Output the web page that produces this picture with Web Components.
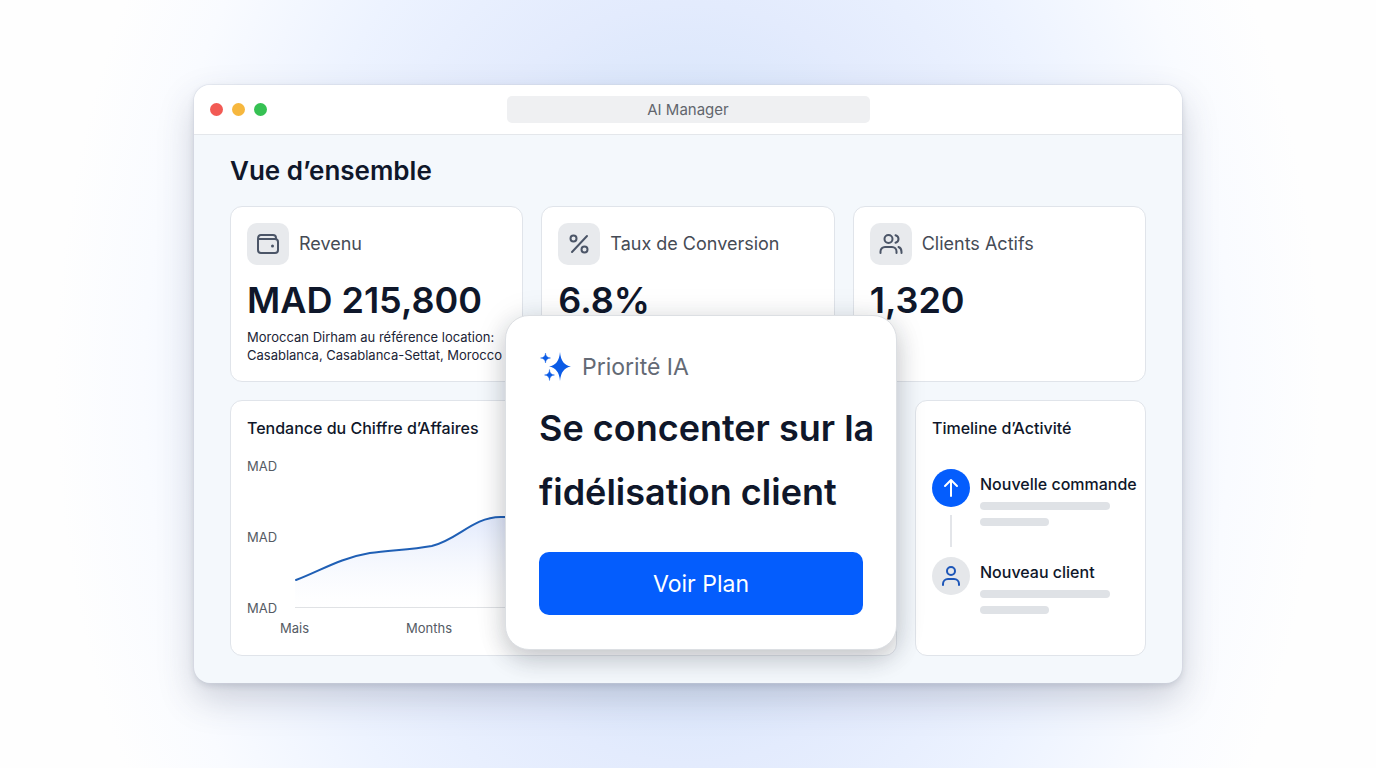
<!DOCTYPE html>
<html lang="fr">
<head>
<meta charset="utf-8">
<meta name="viewport" content="width=device-width, initial-scale=1">
<title>AI Manager</title>
<style>
  body {
    margin: 0;
    font-family: Inter, "Liberation Sans", sans-serif;
    color: #0f172a;
    background: #fefefe;
  }
</style>
</head>
<body>
<ai-dashboard></ai-dashboard>

<script>
const define = (name, html) => {
  const template = document.createElement('template');
  template.innerHTML = html;
  customElements.define(name, class extends HTMLElement {
    constructor() {
      super();
      this.attachShadow({ mode: 'open' }).append(template.content.cloneNode(true));
    }
  });
};

define('app-window', `
  <style>
    :host { display: block; border-radius: 16px; background: #f4f8fc;
      box-shadow: 0 0 0 1px rgba(205,212,224,.35), 0 16px 36px rgba(60,65,85,.22), 0 3px 6px rgba(60,65,85,.14); }
    header { display: grid; grid-template-columns: 1fr minmax(0, 363px) 1fr; align-items: center;
      height: 49px; padding: 0 16px; background: #fff; border-bottom: 1px solid #e4e7eb; border-radius: 16px 16px 0 0; }
    .dots { display: flex; gap: 9px; }
    .dots i { width: 13px; height: 13px; border-radius: 50%; background: #f25a54; }
    .dots i:nth-child(2) { background: #f6b73e; }
    .dots i:nth-child(3) { background: #36c153; }
    .title { height: 27px; line-height: 28px; border-radius: 5px; background: #eff0f2; color: #62666d;
      font-size: 15px; text-align: center; }
    main { padding: 19px 36px 27px; }
  </style>
  <header>
    <div class="dots"><i></i><i></i><i></i></div>
    <div class="title"><slot name="title"></slot></div>
  </header>
  <main><slot></slot></main>
`);

define('panel-card', `
  <style>
    :host { display: block; box-sizing: border-box; min-width: 0; padding: 16px;
      background: #fff; border: 1px solid #e0e4ea; border-radius: 12px; }
  </style>
  <slot></slot>
`);

define('stat-card', `
  <style>
    :host { display: block; min-width: 0; }
    panel-card { height: 100%; }
    .head { display: flex; align-items: center; gap: 10px; margin-bottom: 7px; }
    .icon { display: grid; place-items: center; width: 42px; height: 42px; border-radius: 10px; background: #e8eaed; color: #4b5567; }
    .label { font-size: 18px; line-height: 24px; color: #454b55; white-space: nowrap; }
    .value { font-size: 36px; line-height: 56px; font-weight: 600; white-space: nowrap; }
    .note { font-size: 13px; line-height: 18px; color: #1b2436; white-space: nowrap; }
  </style>
  <panel-card>
    <div class="head">
      <span class="icon"><slot name="icon"></slot></span>
      <span class="label"><slot name="label"></slot></span>
    </div>
    <div class="value"><slot name="value"></slot></div>
    <div class="note"><slot></slot></div>
  </panel-card>
`);

define('trend-chart', `
  <style>
    :host { display: block; }
    panel-card { height: 100%; }
    h2 { margin: 0 0 17px; font-size: 16px; line-height: 22px; font-weight: 500; }
    .plot { display: grid; grid-template-columns: 32px minmax(0, 1fr); column-gap: 16px; }
    .y { display: flex; flex-direction: column; justify-content: space-between; height: 162px; }
    .y, .x { font-size: 13px; line-height: 20px; color: #555b64; }
    svg { display: block; width: 100%; height: 142px; margin: 10px 0; }
    .x { display: grid; grid-template-columns: repeat(4, 126px); padding-left: 33px; }
  </style>
  <panel-card>
    <h2>Tendance du Chiffre d’Affaires</h2>
    <div class="plot">
      <div class="y"><span>MAD</span><span>MAD</span><span>MAD</span></div>
      <svg viewBox="0 0 586 142" preserveAspectRatio="none" aria-hidden="true">
        <defs>
          <linearGradient id="fill" x1="0" y1="0" x2="0" y2="1">
            <stop offset="0" stop-color="#bfd0f8" stop-opacity=".9"/>
            <stop offset="1" stop-color="#eef2fd" stop-opacity="0"/>
          </linearGradient>
        </defs>
        <path fill="url(#fill)" d="M0 114C25 105 45 92 75 87C95 84 115 84 137 80C163 74 178 51 206 51C260 51 300 20 360 24C430 28 500 8 586 4V142H0Z"/>
        <path fill="none" stroke="#e0e2e5" d="M0 142H586" stroke-width="2"/>
        <path fill="none" stroke="#1f5fb5" stroke-width="2" stroke-linecap="round" d="M1 114C25 105 45 92 75 87C95 84 115 84 137 80C163 74 178 51 206 51C260 51 300 20 360 24C430 28 500 8 586 4"/>
      </svg>
    </div>
    <div class="x"><span>Mais</span><span>Months</span></div>
  </panel-card>
`);

define('timeline-item', `
  <style>
    :host { display: grid; grid-template-columns: 38px minmax(0, 1fr); column-gap: 10px; }
    .rail { display: flex; flex-direction: column; align-items: center; }
    .dot { display: grid; place-items: center; width: 38px; height: 38px; border-radius: 50%; background: #e5e7ea; color: #1d56b8; }
    :host([active]) .dot { background: #045dfd; color: #fff; }
    .line { width: 2px; height: 32px; margin: 8px 0 10px; background: #e3e5e9; }
    :host([last]) .line { display: none; }
    .text { padding-top: 5px; font-size: 16px; line-height: 20px; font-weight: 500; white-space: nowrap; }
    .bar { width: 130px; height: 8px; margin-top: 8px; border-radius: 4px; background: #dfe2e6; }
    .bar.short { width: 69px; }
  </style>
  <div class="rail"><span class="dot"><slot name="icon"></slot></span><span class="line"></span></div>
  <div>
    <div class="text"><slot></slot></div>
    <div class="bar"></div>
    <div class="bar short"></div>
  </div>
`);

define('activity-timeline', `
  <style>
    :host { display: block; }
    panel-card { height: 100%; }
    h2 { margin: 0 0 30px; font-size: 16px; line-height: 22px; font-weight: 500; white-space: nowrap; }
    svg { display: block; }
  </style>
  <panel-card>
    <h2>Timeline d’Activité</h2>
    <timeline-item active>
      <svg slot="icon" width="22" height="22" viewBox="0 0 22 22" fill="none" stroke="currentColor" stroke-width="2" stroke-linecap="round" stroke-linejoin="round" aria-hidden="true"><path d="M11 19V3M5 9l6-6 6 6"/></svg>
      Nouvelle commande
    </timeline-item>
    <timeline-item last>
      <svg slot="icon" width="22" height="22" viewBox="0 0 22 22" fill="none" stroke="currentColor" stroke-width="2" stroke-linecap="round" aria-hidden="true"><circle cx="11" cy="6" r="4"/><path d="M3 20v-1a5 5 0 0 1 5-5h6a5 5 0 0 1 5 5v1"/></svg>
      Nouveau client
    </timeline-item>
  </panel-card>
`);

define('priority-card', `
  <style>
    :host { display: block; box-sizing: border-box; padding: 35px 33px 34px; background: #fff;
      border: 1px solid #dcdfe3; border-radius: 24px;
      box-shadow: 0 10px 24px rgba(30,35,50,.20), 0 2px 32px rgba(30,35,50,.10); }
    .tag { display: flex; align-items: center; gap: 11px; height: 32px; margin-bottom: 13px; font-size: 23px; line-height: 32px; color: #646a75; }
    h2 { margin: 0 0 28px; font-size: 36px; line-height: 64px; font-weight: 600; white-space: nowrap; }
    button { display: block; width: 100%; height: 63px; padding: 0; border: 0; border-radius: 10px;
      background: #045dfd; color: #fff; font: 400 23px/32px Inter, "Liberation Sans", sans-serif; cursor: pointer; }
  </style>
  <div class="tag">
    <svg width="32" height="32" viewBox="0 0 32 32" fill="#0b5be6" aria-hidden="true">
      <path d="M21 1Q22 14 32 15.500Q22 17 21 30Q20 17 10 15.500Q20 14 21 1Z"/>
      <path d="M6.500 2Q6.800 6.700 11.500 7Q6.800 7.300 6.500 12Q6.200 7.300 1.500 7Q6.200 6.700 6.500 2Z" stroke="#0b5be6" stroke-width=".4"/>
      <path d="M10.500 18.500Q10.800 23.700 15.500 24Q10.800 24.300 10.500 29.500Q10.200 24.300 5.500 24Q10.200 23.700 10.500 18.500Z" stroke="#0b5be6" stroke-width=".4"/>
    </svg>
    <span>Priorité IA</span>
  </div>
  <h2>Se concenter sur la<br>fidélisation client</h2>
  <button type="button">Voir Plan</button>
`);

define('ai-dashboard', `
  <style>
    :host { display: grid; align-items: center; justify-items: center; min-height: 100vh; box-sizing: border-box; padding: 24px;
      background: radial-gradient(ellipse 46% 110% at center, #d9e6fb 0 32%, #e3ebfd 45%, #edf3ff 66%, #f9fbff 86%, #fefefe); }
    app-window { width: 100%; max-width: 988px; }
    h1 { margin: 0 0 18px; font-size: 26px; line-height: 34px; font-weight: 600; }
    .stats { display: grid; grid-template-columns: repeat(3, minmax(0, 1fr)); grid-auto-rows: minmax(176px, auto); gap: 18px; margin-bottom: 18px; }
    .details { display: grid; grid-template-columns: minmax(0, 1fr) 231px; grid-auto-rows: minmax(256px, auto); gap: 18px; }
    .trend { position: relative; display: grid; }
    priority-card { position: absolute; right: 0; bottom: 6px; width: 392px; }
    svg { display: block; }
  </style>
  <app-window>
    <span slot="title">AI Manager</span>
    <h1>Vue d’ensemble</h1>
    <div class="stats">
      <stat-card>
        <svg slot="icon" width="24" height="24" viewBox="0 0 24 24" fill="none" stroke="currentColor" stroke-width="2" stroke-linejoin="round" aria-hidden="true"><path d="M2 7V18a3 3 0 0 0 3 3H19a3 3 0 0 0 3-3V10a3 3 0 0 0-3-3H2C2 4.500 3 3 5 3H17a3 3 0 0 1 3 3V7"/><circle cx="16.500" cy="14" r="1.500" fill="currentColor" stroke="none"/></svg>
        <span slot="label">Revenu</span><span slot="value">MAD 215,800</span>
        Moroccan Dirham au référence location:<br>Casablanca, Casablanca-Settat, Morocco
      </stat-card>
      <stat-card>
        <svg slot="icon" width="24" height="24" viewBox="0 0 24 24" fill="none" stroke="currentColor" stroke-width="2" stroke-linecap="round" aria-hidden="true"><path d="M20 4L5 20"/><circle cx="6.500" cy="6.500" r="3"/><circle cx="17.500" cy="17.500" r="3"/></svg>
        <span slot="label">Taux de Conversion</span><span slot="value">6.8%</span>
      </stat-card>
      <stat-card>
        <svg slot="icon" width="24" height="24" viewBox="0 0 24 24" fill="none" stroke="currentColor" stroke-width="2" stroke-linecap="round" aria-hidden="true"><circle cx="9.500" cy="7" r="4"/><path d="M1.500 21v-1.500a4.500 4.500 0 0 1 4.500-4.500h7a4.500 4.500 0 0 1 4.500 4.500V21M16.500 3.200q3 1 3 3.800t-3 3.800M19.500 15q3 1 3 5v1"/></svg>
        <span slot="label">Clients Actifs</span><span slot="value">1,320</span>
      </stat-card>
    </div>
    <div class="details">
      <div class="trend">
        <trend-chart></trend-chart>
        <priority-card></priority-card>
      </div>
      <activity-timeline></activity-timeline>
    </div>
  </app-window>
`);
</script>
</body>
</html>
